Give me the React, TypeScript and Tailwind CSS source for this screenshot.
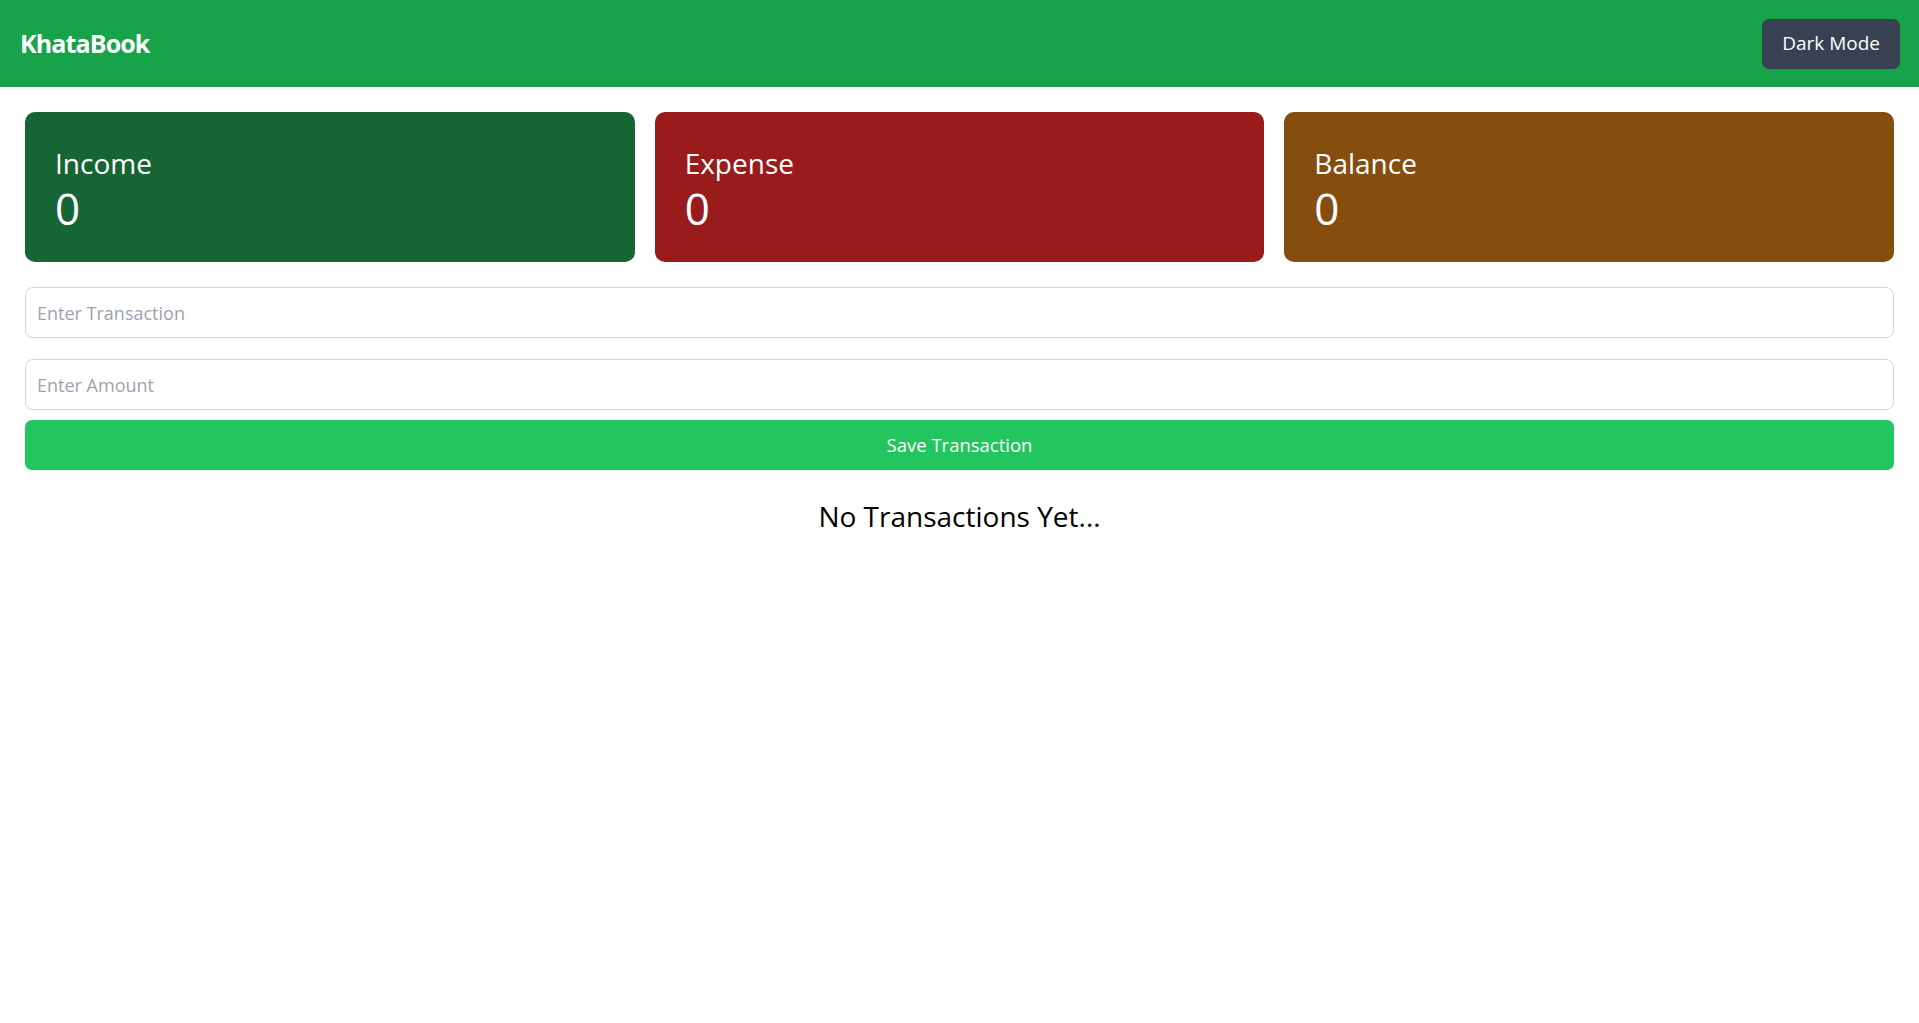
import React, { useState } from "react";

interface Txn {
  id: number;
  text: string;
  amount: number;
}

const font = { fontFamily: '"Open Sans", "Noto Sans", sans-serif' };

const StatCard: React.FC<{ label: string; value: number; color: string }> = ({ label, value, color }) => (
  <div className={`${color} rounded-[10px] pt-[31px] pb-[29px] px-[30px] text-white`}>
    <h3 className="text-[28px] leading-[40px]">{label}</h3>
    <p className="text-[44px] leading-[50px]">{value}</p>
  </div>
);

const App: React.FC = () => {
  const [text, setText] = useState("");
  const [amount, setAmount] = useState("");
  const [txns, setTxns] = useState<Txn[]>([]);

  const income = txns.filter((t) => t.amount > 0).reduce((s, t) => s + t.amount, 0);
  const expense = txns.filter((t) => t.amount < 0).reduce((s, t) => s - t.amount, 0);

  const save = () => {
    const n = Number(amount);
    if (!text.trim() || !n) return;
    setTxns([...txns, { id: Date.now(), text, amount: n }]);
    setText("");
    setAmount("");
  };

  return (
    <div className="min-h-screen bg-white" style={font}>
      <nav className="h-[87px] bg-[#16a34a] flex items-center justify-between pl-[20px] pr-[19px]">
        <h1 className="text-[25px] font-bold text-white tracking-[-0.035em]">KhataBook</h1>
        <button className="h-[50px] px-[20px] rounded-[7px] bg-[#374151] text-white text-[19px]">Dark Mode</button>
      </nav>

      <div className="px-[25px] pt-[25px]">
        <div className="grid grid-cols-3 gap-[20px]">
          <StatCard label="Income" value={income} color="bg-[#166534]" />
          <StatCard label="Expense" value={expense} color="bg-[#991b1b]" />
          <StatCard label="Balance" value={income - expense} color="bg-[#854d0e]" />
        </div>

        <div className="mt-[25px] flex flex-col">
          <input
            value={text}
            onChange={(e) => setText(e.target.value)}
            placeholder="Enter Transaction"
            className="h-[51px] w-full rounded-[8px] border border-[#d1d5db] px-[11px] text-[18px] text-gray-800 placeholder:text-[#9ca3af] outline-none"
          />
          <input
            value={amount}
            onChange={(e) => setAmount(e.target.value)}
            placeholder="Enter Amount"
            className="mt-[21px] h-[51px] w-full rounded-[8px] border border-[#d1d5db] px-[11px] text-[18px] text-gray-800 placeholder:text-[#9ca3af] outline-none"
          />
          <button
            onClick={save}
            className="mt-[10px] h-[50px] w-full rounded-[7px] bg-[#22c55e] text-white text-[18.5px]"
          >
            Save Transaction
          </button>
        </div>

        {txns.length === 0 ? (
          <p className="mt-[26px] text-center text-[28px] leading-[40px] text-black">No Transactions Yet...</p>
        ) : (
          <ul className="mt-[20px] space-y-2">
            {txns.map((t) => (
              <li key={t.id} className="flex justify-between border-b border-gray-200 py-2 text-[18px]">
                <span>{t.text}</span>
                <span className={t.amount > 0 ? "text-green-700" : "text-red-700"}>{t.amount}</span>
              </li>
            ))}
          </ul>
        )}
      </div>
    </div>
  );
};

export default App;
